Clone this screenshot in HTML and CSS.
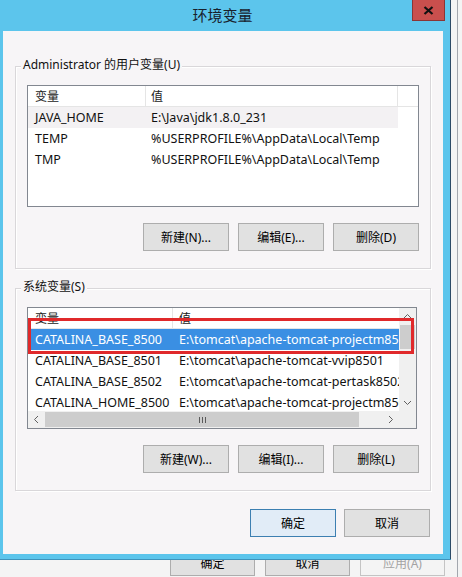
FILE: index.html
```html
<!DOCTYPE html>
<html lang="zh-CN">
<head>
<meta charset="utf-8">
<title>环境变量</title>
<link rel="stylesheet" href="styles.css">
</head>
<body>
<div class="screen">
  <div class="parent">
    <div class="parent-buttons">
      <button class="pbtn">确定</button>
      <button class="pbtn">取消</button>
      <button class="pbtn disabled">应用(A)</button>
    </div>
  </div>

  <div class="dialog">
    <div class="titlebar">
      <span class="title">环境变量</span>
      <span class="close">
        <svg width="11" height="9" viewBox="0 0 11 9"><path d="M1.5 1 L9.5 8 M9.5 1 L1.5 8" stroke="#111" stroke-width="2.2" fill="none"/></svg>
      </span>
    </div>

    <div class="client">
      <div class="group">
        <div class="legend">Administrator 的用户变量(U)</div>
        <div class="list user-list">
          <div class="lhead">
            <div class="h1">变量</div>
            <div class="h2">值</div>
          </div>
          <div class="row hot"><div class="c1">JAVA_HOME</div><div class="c2">E:\Java\jdk1.8.0_231</div></div>
          <div class="row"><div class="c1">TEMP</div><div class="c2">%USERPROFILE%\AppData\Local\Temp</div></div>
          <div class="row"><div class="c1">TMP</div><div class="c2">%USERPROFILE%\AppData\Local\Temp</div></div>
        </div>
        <div class="btnrow">
          <button class="btn">新建(N)...</button>
          <button class="btn">编辑(E)...</button>
          <button class="btn">删除(D)</button>
        </div>
      </div>

      <div class="group sys-group">
        <div class="legend">系统变量(S)</div>
        <div class="list sys-list">
          <div class="viewport">
            <div class="lhead">
              <div class="h1">变量</div>
              <div class="h2">值</div>
            </div>
            <div class="row selected"><div class="c1">CATALINA_BASE_8500</div><div class="c2">E:\tomcat\apache-tomcat-projectm8500</div></div>
            <div class="row"><div class="c1">CATALINA_BASE_8501</div><div class="c2">E:\tomcat\apache-tomcat-vvip8501</div></div>
            <div class="row"><div class="c1">CATALINA_BASE_8502</div><div class="c2">E:\tomcat\apache-tomcat-pertask8502</div></div>
            <div class="row"><div class="c1">CATALINA_HOME_8500</div><div class="c2">E:\tomcat\apache-tomcat-projectm8500</div></div>
          </div>
          <div class="vscroll">
            <div class="arrow"><svg width="17" height="17" viewBox="0 0 17 17"><polyline points="5,10 8.5,6.5 12,10" fill="none" stroke="#606060" stroke-width="1"/></svg></div>
            <div class="vthumb"></div>
            <div class="arrow down"><svg width="17" height="17" viewBox="0 0 17 17"><polyline points="5,7 8.5,10.5 12,7" fill="none" stroke="#606060" stroke-width="1"/></svg></div>
          </div>
          <div class="hscroll">
            <div class="arrow"><svg width="17" height="17" viewBox="0 0 17 17"><polyline points="10,5 6.5,8.5 10,12" fill="none" stroke="#606060" stroke-width="1"/></svg></div>
            <div class="hthumb"><span class="grip"></span><span class="grip"></span><span class="grip"></span></div>
            <div class="track"></div>
            <div class="arrow"><svg width="17" height="17" viewBox="0 0 17 17"><polyline points="7,5 10.5,8.5 7,12" fill="none" stroke="#606060" stroke-width="1"/></svg></div>
          </div>
          <div class="corner"></div>
          <div class="mark"></div>
        </div>
        <div class="btnrow">
          <button class="btn">新建(W)...</button>
          <button class="btn">编辑(I)...</button>
          <button class="btn">删除(L)</button>
        </div>
      </div>

      <div class="okrow">
        <button class="btn default">确定</button>
        <button class="btn">取消</button>
      </div>
    </div>
  </div>
</div>
</body>
</html>
```

FILE: styles.css
```css
* { box-sizing: border-box; }
html, body { margin: 0; padding: 0; }
body {
  width: 462px;
  height: 577px;
  overflow: hidden;
  font-family: "Noto Sans", "Noto Sans CJK SC", sans-serif;
  font-size: 12px;
  color: #000;
}
.screen { position: relative; width: 462px; height: 577px; }

/* parent window underneath */
.parent {
  width: 462px;
  height: 577px;
  background: #f4f4f4;
  display: flex;
  flex-direction: column;
  justify-content: flex-end;
  padding: 0 17px 1px 0;
  box-shadow: inset -4px 0 0 #f4f4f4, inset -5px 0 0 #a3a7ae;
}
.parent-buttons { display: flex; justify-content: flex-end; gap: 10px; }
.pbtn {
  width: 85px; height: 23px;
  border: 1px solid #adadad; background: #e1e1e1;
  font: inherit; color: #000;
  padding: 0 0 6px 0;
}
.pbtn.disabled { background: #f4f4f4; border-color: #c4c4c4; color: #a3a3a3; }

/* dialog */
.dialog {
  position: absolute; left: 0; top: 0;
  width: 451px; height: 559px;
  background: #5cc5ec;
  border-right: 1px solid #2c4a66;
  box-shadow: 0 1px 0 #3f93bb;
  display: flex; flex-direction: column;
  padding-bottom: 5px;
}
.titlebar {
  height: 31px;
  display: grid;
  grid-template-columns: 1fr auto 1fr;
  padding-right: 5px;
}
.title {
  grid-column: 2;
  font-size: 15px;
  line-height: 31px;
  color: #18212c;
}
.close {
  grid-column: 3;
  justify-self: end;
  align-self: start;
  width: 33px; height: 21px;
  background: #c94f4d;
  border: 1px solid #8b3535;
  border-top: none;
  display: flex; align-items: center; justify-content: center;
}
.client {
  flex: 1;
  margin: 0 7px 0 3px;
  background: #f7f5f7;
  padding: 35px 12px 0 12px;
}

/* group boxes */
.group {
  border: 1px solid #d9d7da;
  box-shadow: inset 1px 1px 0 #fff, 1px 1px 0 #fff;
  padding: 0 11px 17px 11px;
}
.sys-group { margin-top: 19px; }
.legend {
  width: fit-content;
  margin: -10px 0 0 -6px;
  padding: 0 2px;
  line-height: 16px;
  background: #f7f5f7;
  color: #111;
}

/* list views */
.list {
  margin-top: 12px;
  height: 122px;
  border: 1px solid #828790;
  background: #fff;
  overflow: hidden;
  font-size: 12.5px;
}
.lhead {
  display: flex;
  height: 21px;
  border-bottom: 1px solid #e5e5e5;
  align-items: stretch;
  font-size: 12px;
}
.lhead > div { display: flex; align-items: center; color: #222; }
.user-list .h1 { width: 118px; padding-left: 7px; border-right: 1px solid #e5e5e5; }
.user-list .h2 { width: 252px; padding-left: 5px; border-right: 1px solid #e5e5e5; }
.row {
  display: flex;
  height: 21px;
  align-items: center;
  white-space: nowrap;
  color: #111;
}
.user-list .row { width: 370px; }
.user-list .c1 { width: 118px; padding-left: 7px; flex: none; }
.user-list .c2 { padding-left: 5px; }
.row.hot { background: #f3f1f3; }

.sys-list {
  margin-right: 2px;
  display: grid;
  grid-template-columns: 1fr 17px;
  grid-template-rows: 1fr 17px;
  position: relative;
}
.viewport { overflow: hidden; }
.sys-list .lhead, .sys-list .row { width: 600px; }
.sys-list .h1 { width: 145px; padding-left: 7px; border-right: 1px solid #e5e5e5; flex: none; }
.sys-list .h2 { padding-left: 6px; }
.sys-list .c1 { width: 145px; padding-left: 7px; flex: none; }
.sys-list .c2 { padding-left: 6px; }
.row.selected { background: #3a8fe3; color: #fff; }

.arrow { width: 17px; height: 17px; flex: none; display: flex; }
.vscroll { background: #f0f0f0; display: flex; flex-direction: column; }
.vthumb { height: 24px; margin: 0 1px; background: #cdcdcd; }
.arrow.down { margin-top: auto; }
.hscroll { background: #f0f0f0; display: flex; }
.hthumb {
  width: 314px;
  background: #cdcdcd;
  display: flex; align-items: center; justify-content: center; gap: 2px;
  margin: 1px 0;
}
.grip { width: 1px; height: 6px; background: #5a5a5a; }
.track { flex: 1; }
.corner { background: #f0f0f0; }

/* red annotation box drawn over the list */
.mark {
  position: absolute;
  left: 0; top: 10px;
  width: 386px; height: 36px;
  border: 3px solid #e0292b;
}

/* buttons */
.btnrow { display: flex; justify-content: flex-end; gap: 9px; margin-top: 16px; }
.btn {
  width: 86px; height: 28px;
  border: 1px solid #adadad;
  background: #e1e1e1;
  font: inherit; color: #000; padding: 0;
}
.btn.default { border-color: #3c7fb1; background: #e1ecf7; }
.okrow {
  display: flex; justify-content: flex-end; gap: 8px;
  margin-top: 18px; padding-right: 1px;
}
```
